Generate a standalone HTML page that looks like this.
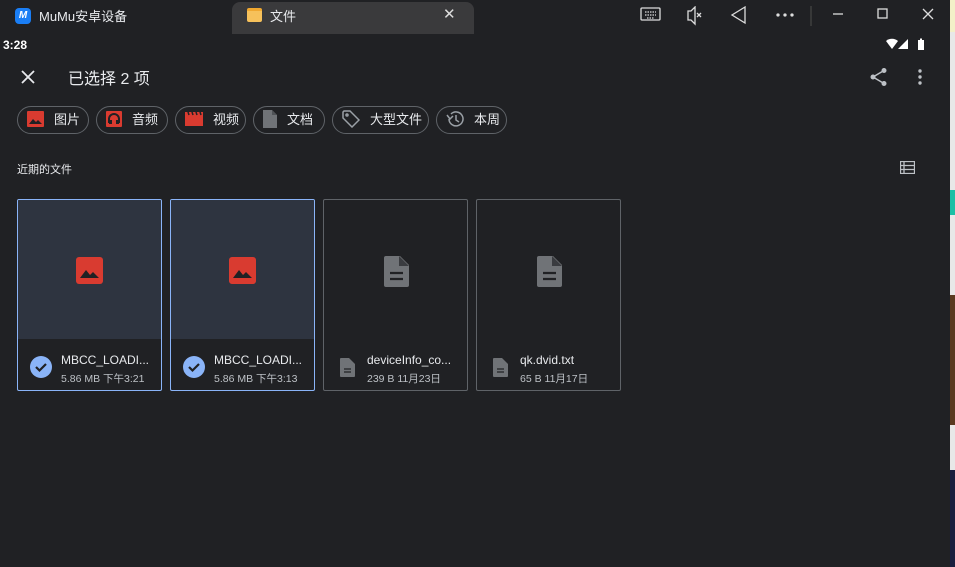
<!DOCTYPE html>
<html><head><meta charset="utf-8"><style>
*{margin:0;padding:0;box-sizing:border-box}
body{width:955px;height:567px;background:#202124;font-family:"Liberation Sans","Noto Sans CJK SC",sans-serif;color:#e8eaed;position:relative;overflow:hidden}
.abs{position:absolute}
.chip{position:absolute;top:106px;height:28px;border:1px solid #5f6368;border-radius:14px;display:flex;align-items:center;font-size:13px;line-height:13px;color:#e8eaed;padding-bottom:2px}
.chip svg{margin-left:9px;margin-right:10px}
.card{position:absolute;top:199px;width:145px;height:192px;border:1px solid #5f6368;border-radius:2px;overflow:hidden}
.card.sel{border:1.5px solid #8ab4f8}
.card .top{position:absolute;left:0;top:0;right:0;height:139px}
.sel .top{background:#2e3440}
.card .name{position:absolute;left:43px;top:153px;font-size:12px;color:#e8eaed;white-space:nowrap}
.card .meta{position:absolute;left:43px;top:171px;font-size:10.5px;color:#bdc1c6;white-space:nowrap}
</style></head><body>
<div class="abs" style="left:0;top:0;width:955px;height:33px;background:#202124"></div>
<div class="abs" style="left:15px;top:8px;width:16px;height:16px;background:#1a7ef5;border-radius:4px;color:#fff;font-size:10px;font-weight:bold;text-align:center;line-height:16px;font-style:italic">M</div>
<div class="abs" style="left:39px;top:6px;font-size:13px;color:#e8eaed">MuMu安卓设备</div>
<div class="abs" style="left:232px;top:2px;width:242px;height:32px;background:#3a3a3c;border-radius:8px 8px 0 0"></div>
<div class="abs" style="left:247px;top:8px;width:15px;height:14px;background:#f6c15b;border-radius:2px;border-top:3px solid #f0a830"></div>
<div class="abs" style="left:270px;top:6px;font-size:13px">文件</div>
<div class="abs" style="left:443px;top:5px;font-size:15px;color:#ddd">✕</div>
<svg class="abs" style="left:640px;top:6px" width="300" height="20" fill="none" stroke="#ddd" stroke-width="1.3">
<rect x="1" y="2" width="19" height="12" rx="1"/><path d="M5 6h11M5 9h11M7 12h7" stroke-dasharray="1.5 1"/>
<path d="M48 5h3l4-4v17l-4-4h-3z"/><path d="M57 7l4 4M61 7l-4 4"/>
<path d="M105 1L92 9l13 8z"/>
<circle cx="138" cy="9" r="1" fill="#ddd"/><circle cx="145" cy="9" r="1" fill="#ddd"/><circle cx="152" cy="9" r="1" fill="#ddd"/>
<path d="M171 0v20" stroke="#444"/>
<path d="M193 8h10"/><rect x="238" y="3" width="9" height="9"/><path d="M283 3l10 10M293 3l-10 10"/>
</svg>
<div class="abs" style="left:950px;top:0;width:5px;height:567px;background:#e8e8e8"></div>
<div class="abs" style="left:950px;top:0;width:5px;height:32px;background:#f3f0c8"></div>
<div class="abs" style="left:950px;top:190px;width:5px;height:25px;background:#1bbfa5"></div>
<div class="abs" style="left:950px;top:295px;width:5px;height:130px;background:#5a3a20"></div>
<div class="abs" style="left:950px;top:470px;width:5px;height:97px;background:#1a2040"></div>
<div class="abs" style="left:3px;top:38px;font-size:12px;font-weight:bold;color:#fff">3:28</div>
<svg class="abs" style="left:885px;top:38px" width="42" height="13"><path d="M1 3a9 9 0 0 1 12 0L7 11z" fill="#fff"/><path d="M23 1v10h-10z" fill="#fff"/><rect x="33" y="2" width="6" height="10" fill="#fff"/><rect x="35" y="0.5" width="2" height="2" fill="#fff"/></svg>
<svg class="abs" style="left:21px;top:70px" width="14" height="14" stroke="#e8eaed" stroke-width="1.8"><path d="M1 1l12 12M13 1L1 13"/></svg>
<div class="abs" style="left:68px;top:65px;font-size:16px;color:#e8eaed">已选择 2 项</div>
<svg class="abs" style="left:869px;top:67px" width="20" height="20" fill="#bdc1c6"><circle cx="15" cy="3.5" r="2.5"/><circle cx="4" cy="10" r="2.5"/><circle cx="15" cy="16.5" r="2.5"/><path d="M15 3.5L4 10l11 6.5" stroke="#bdc1c6" stroke-width="1.5" fill="none"/></svg>
<svg class="abs" style="left:917px;top:69px" width="6" height="16" fill="#bdc1c6"><circle cx="3" cy="2" r="1.7"/><circle cx="3" cy="8" r="1.7"/><circle cx="3" cy="14" r="1.7"/></svg>
<div class="chip" style="left:17px;width:72px"><svg width="17" height="16"><rect width="17" height="16" rx="1" fill="#d93b30"/><path d="M2 13l4-5 3 3 2-2 4 4z" fill="#202124"/></svg>图片</div>
<div class="chip" style="left:96px;width:72px"><svg width="16" height="16"><rect width="16" height="16" rx="1" fill="#d93b30"/><path d="M3 12V8a5 5 0 0 1 10 0v4" stroke="#202124" stroke-width="2" fill="none"/><rect x="3" y="9" width="3" height="4" fill="#202124"/><rect x="10" y="9" width="3" height="4" fill="#202124"/></svg>音频</div>
<div class="chip" style="left:175px;width:71px"><svg width="18" height="14"><rect y="3" width="18" height="11" fill="#d93b30"/><path d="M0 0h18v3H0z" fill="#d93b30"/><path d="M3 0l1 3M7 0l1 3M11 0l1 3M15 0l1 3" stroke="#202124" stroke-width="1.5"/></svg>视频</div>
<div class="chip" style="left:253px;width:72px"><svg width="14" height="18"><path d="M0 0h9l5 5v13H0z" fill="#707377"/><path d="M9 0v5h5" fill="#505357"/></svg>文档</div>
<div class="chip" style="left:332px;width:97px"><svg width="18" height="18" fill="none" stroke="#9aa0a6" stroke-width="1.5"><path d="M1 2v6l9 9 7-7-9-9H2z"/><circle cx="5" cy="5" r="1"/></svg>大型文件</div>
<div class="chip" style="left:436px;width:71px"><svg width="18" height="18" fill="none" stroke="#9aa0a6" stroke-width="1.5"><path d="M3 9a7 7 0 1 0 2-5"/><path d="M1 5l3 4 3-3"/><path d="M10 5v5l3 2"/></svg>本周</div>
<div class="abs" style="left:17px;top:161px;font-size:11px;color:#e8eaed">近期的文件</div>
<svg class="abs" style="left:900px;top:161px" width="15" height="13" fill="none" stroke="#bdc1c6" stroke-width="1.3"><rect x="0.5" y="0.5" width="14" height="12"/><path d="M0.5 4.5h14M0.5 8.5h14M4 0.5v12"/></svg>
<div class="card sel" style="left:17px"><div class="top"></div>
<svg class="abs" style="left:58px;top:57px" width="27" height="27"><rect width="27" height="27" rx="3" fill="#d93b30"/><path d="M4 21l6-8 4 5 3-3 6 6z" fill="#202124"/></svg>
<svg class="abs" style="left:11px;top:155px" width="24" height="24"><circle cx="12" cy="12" r="11" fill="#8ab4f8"/><path d="M7 12l3.5 3.5L17 9" stroke="#202124" stroke-width="2.2" fill="none"/></svg>
<div class="name">MBCC_LOADI...</div><div class="meta">5.86 MB 下午3:21</div></div>
<div class="card sel" style="left:170px"><div class="top"></div>
<svg class="abs" style="left:58px;top:57px" width="27" height="27"><rect width="27" height="27" rx="3" fill="#d93b30"/><path d="M4 21l6-8 4 5 3-3 6 6z" fill="#202124"/></svg>
<svg class="abs" style="left:11px;top:155px" width="24" height="24"><circle cx="12" cy="12" r="11" fill="#8ab4f8"/><path d="M7 12l3.5 3.5L17 9" stroke="#202124" stroke-width="2.2" fill="none"/></svg>
<div class="name">MBCC_LOADI...</div><div class="meta">5.86 MB 下午3:13</div></div>
<div class="card" style="left:323px">
<svg class="abs" style="left:60px;top:56px" width="25" height="31"><path d="M2 0h14l9 9v20a2 2 0 0 1-2 2H2a2 2 0 0 1-2-2V2a2 2 0 0 1 2-2z" fill="#707377"/><path d="M15 0v10h10z" fill="#3a3c40"/><path d="M6 17h13M6 23h13" stroke="#202124" stroke-width="2.2"/></svg>
<svg class="abs" style="left:16px;top:158px" width="15" height="19"><path d="M1 0h8l6 6v12a1 1 0 0 1-1 1H1a1 1 0 0 1-1-1V1a1 1 0 0 1 1-1z" fill="#707377"/><path d="M4 11h7M4 14h7" stroke="#202124" stroke-width="1.3"/></svg>
<div class="name">deviceInfo_co...</div><div class="meta">239 B 11月23日</div></div>
<div class="card" style="left:476px">
<svg class="abs" style="left:60px;top:56px" width="25" height="31"><path d="M2 0h14l9 9v20a2 2 0 0 1-2 2H2a2 2 0 0 1-2-2V2a2 2 0 0 1 2-2z" fill="#707377"/><path d="M15 0v10h10z" fill="#3a3c40"/><path d="M6 17h13M6 23h13" stroke="#202124" stroke-width="2.2"/></svg>
<svg class="abs" style="left:16px;top:158px" width="15" height="19"><path d="M1 0h8l6 6v12a1 1 0 0 1-1 1H1a1 1 0 0 1-1-1V1a1 1 0 0 1 1-1z" fill="#707377"/><path d="M4 11h7M4 14h7" stroke="#202124" stroke-width="1.3"/></svg>
<div class="name">qk.dvid.txt</div><div class="meta">65 B 11月17日</div></div>
</body></html>
